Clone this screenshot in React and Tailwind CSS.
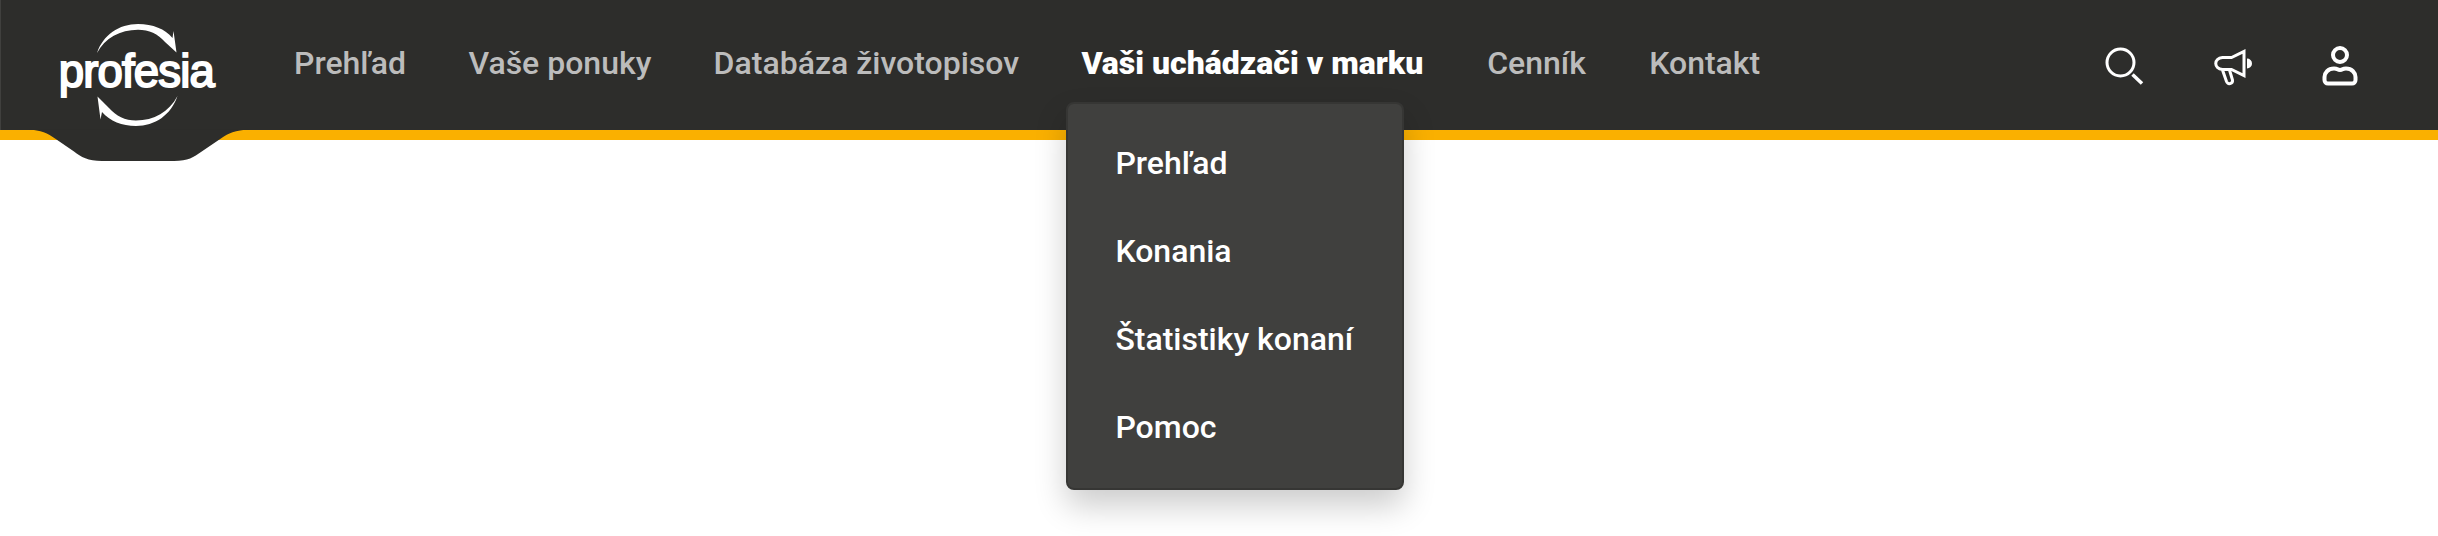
import React from "react";

const menuItems = [
  { label: "Prehľad" },
  { label: "Vaše ponuky" },
  { label: "Databáza životopisov" },
  {
    label: "Vaši uchádzači v marku",
    active: true,
    children: ["Prehľad", "Konania", "Štatistiky konaní", "Pomoc"],
  },
  { label: "Cenník" },
  { label: "Kontakt" },
];

const Logo = () => (
  <svg width="280" height="162" viewBox="0 0 280 162" className="block">
    <path
      d="M28 129.500C41 130 48 133.500 55 138.500L74 151.500C81 157 88 161 102 161H174C188 161 194 157 201 152L222 137.700C228 133.500 235 130 250 129.500Z"
      fill="#2d2d2b"
    />
    <g fill="#fff">
      <path d="M97 53C103 35 119 24 138 24C153 24 165 29 172.500 38L173.500 31L176.500 52.500L165 42C158 34 149 29.800 138 29.800C120 29.800 105 38 97 53Z" />
      <path d="M177.500 96C171 115 155 126 136 126C122 126 110 121 102 112L100.500 119.500L97.500 96.500L109 108C116 116 125 120.500 136 120.500C154 120.500 169 112 177.500 96Z" />
    </g>
    <text
      x="58.800"
      y="87.200"
      textLength="156"
      fontSize="45.500"
      fill="#fff"
      stroke="#fff"
      strokeWidth="1.900"
      className="font-['Liberation_Sans',sans-serif] font-normal"
    >
      profesia
    </text>
  </svg>
);

const SearchIcon = () => (
  <svg width="40" height="40" viewBox="0 0 40 40" fill="none" stroke="#fff" strokeWidth="3">
    <circle cx="16.500" cy="16.500" r="13.500" />
    <path d="M28.500 28.500L38 37.500" strokeWidth="3.500" />
  </svg>
);

const MegaphoneIcon = () => (
  <svg width="40" height="40" viewBox="0 0 40 40" fill="none" stroke="#fff" strokeWidth="3">
    <path d="M10.500 11.500H19.500L32 5.500V29.500L19.500 23.500H10.500C1.500 22.500 1.500 12.500 10.500 11.500Z" />
    <path d="M10.500 24L14.500 35.500C16 39 21 38 20.500 34L17.500 24" />
    <path d="M35 12.500A5 5 0 0 1 35 22.500Z" fill="#fff" stroke="none" />
  </svg>
);

const UserIcon = () => (
  <svg width="40" height="40" viewBox="0 0 40 40" fill="none" stroke="#fff" strokeWidth="4">
    <circle cx="20" cy="9" r="7" />
    <path d="M14 22.500C18 22.500 17 24 20 24C23 24 22 22.500 26 22.500C32 22.500 35.500 27 35.500 31V34C35.500 36 34 37.500 32 37.500H8C6 37.500 4.500 36 4.500 34V31C4.500 27 8 22.500 14 22.500Z" />
  </svg>
);

const Dropdown = ({ items }) => (
  <ul className="absolute top-[63px] -left-[15px] z-10 w-[338px] rounded-lg border-2 border-[#363634] bg-[#40403e] pt-[15px] pb-[17px] text-white shadow-[0_16px_32px_rgba(0,0,0,0.2)]">
    {items.map((item) => (
      <li key={item} className="flex h-[88px] items-center px-[47px]">
        <a href="#" className="leading-[48px] whitespace-nowrap">
          {item}
        </a>
      </li>
    ))}
  </ul>
);

const App = () => {
  return (
    <div className="h-[536px] overflow-hidden bg-white font-[Roboto,sans-serif] text-[32px] font-medium">
      <header className="flex h-[140px] border-b-10 border-[#fab000] bg-[#2d2d2b] shadow-[inset_1px_0_0_#40403e]">
        <a href="#" className="z-1 h-[162px] w-[280px] shrink-0">
          <Logo />
        </a>

        <nav className="flex-1">
          <ul className="flex gap-[62.3px] pt-[39px] pl-[14px] text-[#bcbcbc]">
            {menuItems.map((item) => (
              <li
                key={item.label}
                className={item.active ? "relative mr-[1.5px]" : "last:ml-px"}
              >
                <a
                  href="#"
                  className={
                    item.active
                      ? "block leading-[48px] font-black whitespace-nowrap text-white"
                      : "block leading-[48px] whitespace-nowrap"
                  }
                >
                  {item.label}
                </a>
                {item.children && <Dropdown items={item.children} />}
              </li>
            ))}
          </ul>
        </nav>

        <div className="flex gap-[68px] pt-[46px] pr-[78px]">
          <a href="#">
            <SearchIcon />
          </a>
          <a href="#">
            <MegaphoneIcon />
          </a>
          <a href="#">
            <UserIcon />
          </a>
        </div>
      </header>
    </div>
  );
};

export default App;
